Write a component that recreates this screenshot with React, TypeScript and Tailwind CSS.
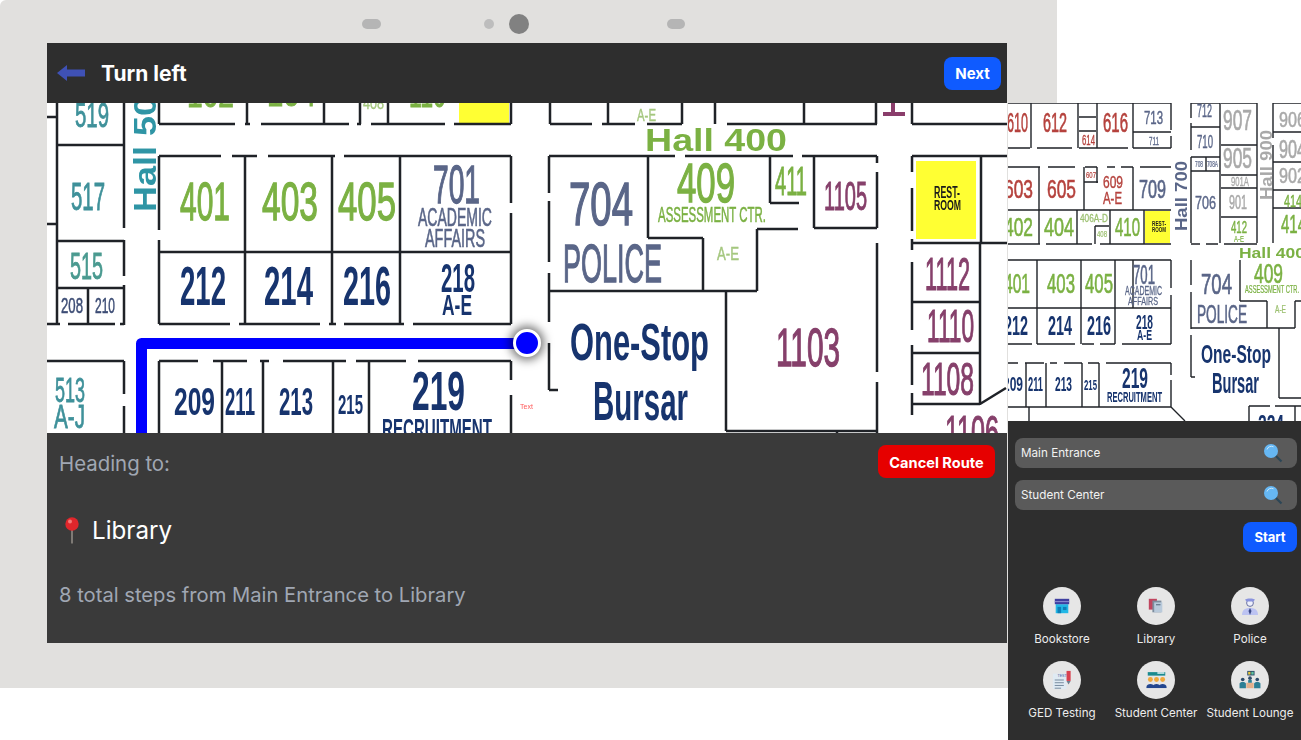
import React from "react";

type Row = [string, number, number, number, number, string?, string?];

const TEAL = "#3f919a";
const GREEN = "#7bb143";
const SLATE = "#5a6688";
const NAVY = "#17346e";
const PLUM = "#86406b";
const RED = "#b5423d";
const GRAY = "#a9a9a9";
const BLK = "#1a1a1a";

const mainTexts: Row[] = [
  ["519", 75, 109, 103, 127, TEAL],
  ["517", 71, 105, 183, 210, TEAL],
  ["515", 70, 103, 253, 279, "#4a9a90"],
  ["513", 55, 85, 378, 402, TEAL],
  ["A-J", 54, 85, 405, 428, TEAL],
  ["208", 61, 83, 298, 313, "#3d4d75"],
  ["210", 95, 115, 298, 313, "#3d4d75"],
  ["102", 187, 234, 80, 107, GREEN],
  ["104", 267, 316, 80, 106, GREEN],
  ["408", 363, 384, 98, 109, "#a5c77f"],
  ["110", 409, 446, 80, 107, GREEN],
  ["401", 180, 230, 182, 220, GREEN],
  ["403", 262, 318, 182, 220, GREEN],
  ["405", 338, 396, 182, 220, GREEN],
  ["701", 433, 480, 166, 203, SLATE],
  ["ACADEMIC", 418, 492, 208, 226, SLATE],
  ["AFFAIRS", 425, 485, 229, 247, SLATE],
  ["212", 180, 226, 266, 305, NAVY],
  ["214", 264, 313, 266, 305, NAVY],
  ["216", 343, 391, 266, 305, NAVY],
  ["218", 441, 475, 264, 292, NAVY],
  ["A-E", 442, 472, 295, 315, NAVY],
  ["209", 174, 215, 388, 415, NAVY],
  ["211", 225, 255, 388, 415, NAVY],
  ["213", 279, 313, 388, 415, NAVY],
  ["215", 338, 363, 395, 414, NAVY],
  ["219", 412, 465, 371, 410, NAVY],
  ["RECRUITMENT", 382, 492, 419, 438, NAVY],
  ["A-E", 637, 656, 110, 121, "#a5c77f"],
  ["704", 569, 633, 182, 225, SLATE],
  ["POLICE", 563, 662, 245, 282, SLATE],
  ["409", 677, 735, 163, 202, GREEN],
  ["ASSESSMENT CTR.", 658, 766, 207, 222, GREEN],
  ["411", 775, 807, 167, 195, GREEN],
  ["A-E", 717, 739, 247, 260, "#a5c77f"],
  ["1105", 824, 867, 181, 210, PLUM],
  ["REST-", 934, 960, 187, 198, BLK],
  ["ROOM", 934, 961, 200, 210, BLK],
  ["One-Stop", 570, 709, 324, 360, NAVY],
  ["Bursar", 593, 688, 381, 420, NAVY],
  ["1103", 776, 840, 328, 366, PLUM],
  ["1112", 925, 970, 258, 290, PLUM],
  ["1110", 927, 974, 310, 342, PLUM],
  ["1108", 921, 974, 363, 395, PLUM],
  ["1106", 945, 999, 416, 448, PLUM],
];

const mainWalls =
  "M47 117H57M57 103V324M47 224H57M58 145H124M124 103V228M124 240V276M124 285V325M58 241H124M58 288H124M88 288V324M47 324H60M68 324H115M120 324H124M47 361H124M124 361V394M124 406V433" +
  "M159 103V124M159 124H235M245 124H250M261 124H349M357 124H361M371 124H445M454 124H511M247 103V124M324 103V124M360 103V124M388 103V124M511 103V124" +
  "M159 156H221M232 156H257M268 156H335M344 156H511M159 156V230M159 240V324M245 156V324M332 156V324M400 156V324M511 156V203M511 213V324M159 252H511M159 324H230M239 324H320M329 324H336M344 324H404M413 324H511" +
  "M159 361H198M213 361H247M260 361H269M283 361H346M356 361H406M418 361H511M159 361V433M222 361V433M263 361V433M333 361V433M369 361V433M511 361V380M511 395V433" +
  "M550 103V124M550 124H592M602 124H635M608 103V124M647 124H682M682 103V124M715 103V124M727 124H877M804 103V124M876 103V124M912 103V124M912 124H1007" +
  "M549 156H675M685 156H793M802 156H877M549 156V193M549 201V262M549 273V322M549 343V390M549 390H558M648 156V238M648 238H703M770 156V203M770 203H799M814 156V228M814 228H877M877 156V163M877 172V228M877 243V372M877 382V433M757 229H798M757 229V291M549 291H757M703 238V291M726 291V431M726 431H877M837 431V433" +
  "M912 156V172M912 188V231M912 156H1007M981 156V243M912 239V250M912 243H1007M912 262V330M912 345V385M912 393V415M980 243V404M912 302H980M912 353H980M912 404H980M980 404L1006 388";

const sideTexts: Row[] = [
  ["610", 1007, 1028, 113, 132, RED],
  ["612", 1043, 1067, 113, 132, RED],
  ["614", 1082, 1095, 135, 145, RED],
  ["616", 1103, 1128, 113, 132, RED],
  ["713", 1144, 1163, 111, 124, SLATE],
  ["711", 1149, 1159, 137, 145, SLATE],
  ["712", 1197, 1212, 104, 117, SLATE],
  ["710", 1197, 1213, 135, 148, SLATE],
  ["708", 1195, 1203, 161, 167, SLATE],
  ["708A", 1207, 1218, 161, 167, SLATE],
  ["907", 1223, 1252, 110, 130, GRAY],
  ["905", 1223, 1252, 148, 168, GRAY],
  ["901A", 1231, 1249, 177, 186, GRAY],
  ["901", 1229, 1247, 195, 209, GRAY],
  ["412", 1231, 1247, 221, 233, GREEN],
  ["A-E", 1234, 1244, 236, 242, GREEN],
  ["906", 1279, 1306, 111, 127, GRAY],
  ["904", 1279, 1306, 140, 158, GRAY],
  ["902", 1279, 1306, 167, 183, GRAY],
  ["414", 1284, 1302, 195, 207, GREEN],
  ["414", 1281, 1306, 215, 233, GREEN],
  ["603", 1004, 1033, 180, 198, RED],
  ["605", 1047, 1076, 180, 198, RED],
  ["607", 1086, 1096, 172, 178, RED],
  ["609", 1103, 1123, 176, 188, RED],
  ["A-E", 1103, 1122, 193, 204, RED],
  ["709", 1139, 1166, 180, 198, SLATE],
  ["706", 1195, 1216, 196, 209, SLATE],
  ["402", 1004, 1033, 218, 236, GREEN],
  ["404", 1044, 1074, 218, 236, GREEN],
  ["406A-D", 1080, 1108, 214, 222, "#9cc070"],
  ["408", 1097, 1107, 231, 237, "#9cc070"],
  ["410", 1115, 1140, 218, 236, GREEN],
  ["REST-", 1152, 1166, 221, 226, BLK],
  ["ROOM", 1152, 1166, 227, 232, BLK],
  ["401", 1004, 1030, 274, 293, GREEN],
  ["403", 1047, 1075, 274, 293, GREEN],
  ["405", 1085, 1113, 274, 293, GREEN],
  ["701", 1133, 1155, 265, 284, SLATE],
  ["ACADEMIC", 1125, 1162, 286, 295, SLATE],
  ["AFFAIRS", 1128, 1158, 297, 305, SLATE],
  ["212", 1004, 1028, 316, 335, NAVY],
  ["214", 1048, 1072, 316, 335, NAVY],
  ["216", 1087, 1111, 316, 335, NAVY],
  ["218", 1136, 1153, 315, 329, NAVY],
  ["A-E", 1137, 1152, 330, 340, NAVY],
  ["209", 1003, 1023, 377, 391, NAVY],
  ["211", 1028, 1043, 377, 391, NAVY],
  ["213", 1055, 1072, 377, 391, NAVY],
  ["215", 1084, 1097, 380, 390, NAVY],
  ["219", 1122, 1148, 368, 388, NAVY],
  ["RECRUITMENT", 1107, 1162, 392, 402, NAVY],
  ["704", 1201, 1232, 273, 294, SLATE],
  ["POLICE", 1197, 1247, 305, 323, SLATE],
  ["409", 1254, 1283, 264, 283, GREEN],
  ["ASSESSMENT CTR.", 1245, 1299, 286, 293, GREEN],
  ["A-E", 1275, 1286, 306, 313, "#9cc070"],
  ["One-Stop", 1201, 1271, 345, 363, NAVY],
  ["Bursar", 1212, 1259, 373, 393, NAVY],
  ["224", 1258, 1284, 415, 433, NAVY],
];

const sideWalls =
  "M1008 103H1171M1191 103H1220M1221 103H1257M1273 103H1301M1031 103V148M1078 103V148M1097 103V148M1079 117H1096M1079 131H1096M1133 103V148M1171 103V130M1171 136V148M1133 132H1171M1008 148H1030M1037 148H1072M1079 148H1128M1133 148H1171" +
  "M1008 167H1040M1048 167H1075M1085 167H1097M1107 167H1115M1121 167H1133M1140 167H1171M1039 167V244M1084 167V210M1133 167V210M1084 182H1098M1097 167V183M1008 210H1171M1077 210V244M1110 210V244M1144 210V244M1095 226V244M1095 226H1109M1008 244H1040M1046 244H1092M1100 244H1171" +
  "M1191 103V118M1191 123V150M1191 157V243M1191 127H1220M1191 157H1220M1191 171H1220M1206 157V171M1220 103V243M1257 103V243M1221 145H1257M1221 175H1257M1221 188H1257M1221 217H1257M1191 244H1200M1206 244H1218M1224 244H1257M1273 103V138M1273 145V243M1273 132H1301M1273 162H1301M1273 190H1301M1273 208H1301" +
  "M1008 260H1171M1037 260V344M1081 260V344M1115 260V344M1133 260V308M1171 260V288M1171 295V344M1008 308H1171M1008 344H1032M1037 344H1075M1082 344H1094M1100 344H1115M1122 344H1171" +
  "M1008 363H1018M1025 363H1044M1050 363H1057M1064 363H1082M1088 363H1099M1106 363H1171M1026 363V407M1046 363V407M1082 363V407M1099 363V407M1171 363V375M1171 380V407M1008 407H1171M1029 407V421M1171 407L1185 421" +
  "M1191 260V285M1191 292V329M1191 335V377M1191 377H1195M1191 328H1279M1240 260V301M1240 301H1267M1267 301V328M1295 301V328M1295 301H1301M1267 328H1295M1279 328V398M1279 398H1301M1249 406H1270M1275 406H1301M1249 406V421M1295 406V421";

const Label = ({ r }: { r: Row }) => {
  const [s, x1, x2, y1, y2, c] = r;
  const heavy = c === NAVY || c === BLK;
  return (
    <text
      x={x1}
      y={y2}
      fontSize={(y2 - y1) / 0.7}
      textLength={x2 - x1}
      lengthAdjust="spacingAndGlyphs"
      fill={c}
      fontWeight={heavy ? 700 : 400}
      stroke={heavy ? "none" : c}
      strokeWidth={heavy ? 0 : (y2 - y1) * 0.035}
      fontFamily="'Liberation Sans', sans-serif"
    >
      {s}
    </text>
  );
};

const MainMap = () => (
  <svg viewBox="47 103 960 330" className="block h-[330px] w-[960px] bg-white blur-[0.4px]">
    <rect x="459" y="103" width="50" height="20" fill="#ffff33" />
    <rect x="916" y="161" width="60" height="78" fill="#ffff33" />
    <path d={mainWalls} stroke="#1f2227" strokeWidth="2.5" fill="none" />
    <path d="M883 116V112H891V103H895V112H905V116Z" fill="#8a3d6b" />
    {mainTexts.map((r, i) => (
      <Label key={i} r={r} />
    ))}
    <text x="645" y="150.5" fontSize="32" fontWeight="700" textLength="142" lengthAdjust="spacingAndGlyphs" fill={GREEN} fontFamily="'Liberation Sans', sans-serif">Hall 400</text>
    <text transform="rotate(-90 156 212)" x="156" y="212" fontSize="32" fontWeight="700" textLength="136" lengthAdjust="spacingAndGlyphs" fill="#2f95a5" fontFamily="'Liberation Sans', sans-serif">Hall 500</text>
    <text x="520" y="409" fontSize="7" fill="#ff5a5a" fontFamily="'Liberation Sans', sans-serif">Text</text>
    <path d="M141.5 433V343.5H527" stroke="#0000ff" strokeWidth="11" fill="none" strokeLinejoin="round" />
  </svg>
);

const SideMap = () => (
  <svg viewBox="1008 103 293 318" className="block h-[318px] w-[293px] bg-white blur-[0.3px]">
    <rect x="1145" y="211" width="25" height="32" fill="#ffff33" />
    <path d={sideWalls} stroke="#1f2227" strokeWidth="1.4" fill="none" />
    {sideTexts.map((r, i) => (
      <Label key={i} r={r} />
    ))}
    <text transform="rotate(-90 1187 231)" x="1187" y="231" fontSize="16" fontWeight="700" textLength="70" lengthAdjust="spacingAndGlyphs" fill={SLATE} fontFamily="'Liberation Sans', sans-serif">Hall 700</text>
    <text transform="rotate(-90 1272 200)" x="1272" y="200" fontSize="16" fontWeight="700" textLength="70" lengthAdjust="spacingAndGlyphs" fill={GRAY} fontFamily="'Liberation Sans', sans-serif">Hall 900</text>
    <text x="1239" y="258" fontSize="14" fontWeight="700" textLength="66" lengthAdjust="spacingAndGlyphs" fill={GREEN} fontFamily="'Liberation Sans', sans-serif">Hall 400</text>
  </svg>
);

const Magnifier = () => (
  <svg viewBox="0 0 20 20" className="h-[20px] w-[20px]">
    <path d="M12 12L18.5 18.5" stroke="#2c4656" strokeWidth="2.2" />
    <circle cx="8" cy="8" r="7" fill="#66b7f3" />
    <path d="M4 6.5A4.6 4.6 0 0 1 10.5 3.8" stroke="#d5ecfb" strokeWidth="0.9" fill="none" />
  </svg>
);

const Store = () => (
  <svg viewBox="0 0 20 20" className="h-[18px] w-[18px]">
    <rect x="3" y="8" width="14" height="10" fill="#22b8e6" />
    <path d="M2 2H18V8H2Z" fill="#3f3fa0" />
    <rect x="2" y="4.5" width="16" height="1.2" fill="#8a8ad0" />
    <rect x="5" y="11" width="4" height="7" fill="#0d7fb8" />
    <rect x="11" y="11" width="4" height="3.5" fill="#0d7fb8" />
  </svg>
);
const Books = () => (
  <svg viewBox="0 0 20 20" className="h-[18px] w-[18px]">
    <rect x="2" y="2" width="9" height="12" fill="#c0455f" />
    <rect x="6" y="4" width="10" height="13" fill="#7d8d9e" />
    <rect x="8" y="6" width="9" height="11" fill="#b9cadb" />
    <rect x="10" y="8" width="5" height="1.2" fill="#5b6b80" />
  </svg>
);
const Officer = () => (
  <svg viewBox="0 0 20 20" className="h-[20px] w-[20px]">
    <path d="M2 19C2 13 6 12 10 12S18 13 18 19Z" fill="#bcc3f2" />
    <path d="M10 12L8.5 15L10 19L11.5 15Z" fill="#3b4a88" />
    <circle cx="10" cy="7" r="3.4" fill="#eef0fb" stroke="#4a5490" strokeWidth="0.8" />
    <path d="M5 3.6C7 2 13 2 15 3.6L13.5 5.5H6.5Z" fill="#8a93dd" />
  </svg>
);
const Test = () => (
  <svg viewBox="0 0 22 22" className="h-[20px] w-[20px]">
    <rect x="1" y="4" width="15" height="17" fill="#dfeaf3" />
    <text x="6" y="8" fontSize="4" fill="#4a5fa0" fontFamily="'Liberation Sans', sans-serif">TEST</text>
    <path d="M3 11H13M3 14H13M3 17H13M3 20H10" stroke="#6d8296" strokeWidth="1" />
    <rect x="16" y="1" width="4.5" height="11" fill="#d8404f" />
    <path d="M16 12H20.5L18.2 16Z" fill="#6b7d8f" />
  </svg>
);
const People = () => (
  <svg viewBox="0 0 24 20" className="h-[18px] w-[21px]">
    <rect x="2" y="1" width="20" height="4" fill="#1b8a8f" />
    <rect x="13" y="1" width="8" height="2" fill="#c7e4e6" />
    {[5, 12, 19].map((x) => (
      <g key={x}>
        <circle cx={x} cy="9.5" r="2.8" fill="#f0a83a" />
        <path d={`M${x - 4.5} 18C${x - 4.5} 13.5 ${x + 4.5} 13.5 ${x + 4.5} 18Z`} fill="#23468f" />
      </g>
    ))}
    <rect x="0.5" y="18" width="23" height="1.2" fill="#23468f" />
  </svg>
);
const Lounge = () => (
  <svg viewBox="0 0 24 22" className="h-[20px] w-[22px]">
    <rect x="9" y="1" width="8" height="5" fill="#2d4a6a" />
    <rect x="10" y="2" width="2.5" height="3" fill="#e8c83c" />
    <rect x="13.5" y="2" width="2.5" height="3" fill="#5fc7a0" />
    <circle cx="12" cy="9" r="2" fill="#2d4a6a" />
    <rect x="8" y="14" width="8" height="6" fill="#e3b08c" />
    {[4, 20].map((x) => (
      <g key={x}>
        <circle cx={x} cy="10.5" r="2" fill="#2d4a6a" />
        <path d={`M${x - 3.5} 20V15C${x - 3.5} 12.5 ${x + 3.5} 12.5 ${x + 3.5} 15V20Z`} fill="#2d7f95" />
      </g>
    ))}
    <path d="M10 14V11.5C10 10.5 14 10.5 14 11.5V14Z" fill="#2d7f95" />
  </svg>
);

const Pin = () => (
  <svg viewBox="0 0 14 27" className="h-[27px] w-[14px]">
    <rect x="6.2" y="11" width="1.6" height="15.5" fill="#8f8a84" />
    <circle cx="7" cy="7" r="6.7" fill="#e0262b" />
    <circle cx="5" cy="4.6" r="2" fill="#f47a78" />
  </svg>
);

const places: [string, React.ReactNode][] = [
  ["Bookstore", <Store />],
  ["Library", <Books />],
  ["Police", <Officer />],
  ["GED Testing", <Test />],
  ["Student Center", <People />],
  ["Student Lounge", <Lounge />],
];

const Field = ({ label }: { label: string }) => (
  <div className="flex h-[30px] items-center justify-between rounded-lg bg-[#5a5a5a] pl-[6px] pr-[14px] text-[11.7px] text-[#f2f2f2]">
    <span className="pt-[2px]">{label}</span>
    <Magnifier />
  </div>
);

export default function App() {
  return (
    <div className="relative h-[740px] w-[1301px] overflow-hidden bg-white font-['Inter',sans-serif]">
      <div className="h-[688px] w-[1057px] rounded-br-xl rounded-tl-md bg-[#e1e0de] pl-[47px]">
        <div className="flex h-[43px] items-center pt-[5px]">
          <span className="ml-[315px] h-[10px] w-[19px] rounded-full bg-[#b5b5b5]" />
          <span className="ml-[103px] h-[10px] w-[10px] rounded-full bg-[#bdbdbd]" />
          <span className="ml-[15px] h-[20px] w-[20px] rounded-full bg-[#818181]" />
          <span className="ml-[138px] h-[10px] w-[18px] rounded-full bg-[#b5b5b5]" />
        </div>
        <div className="w-[960px]">
          <div className="flex h-[60px] items-center justify-between bg-[#2e2e2e] pl-[10px] pr-[6px]">
            <div className="flex items-center gap-[16px]">
              <svg viewBox="0 0 28 16" className="h-[16px] w-[28px]">
                <path d="M0 8L10 0V4.5H28V11.5H10V16Z" fill="#3f51b5" />
              </svg>
              <span className="pt-[2px] text-[21px] font-bold leading-[28px] text-white">Turn left</span>
            </div>
            <button className="h-[33px] w-[57px] rounded-lg bg-[#0f5bff] pt-[3px] text-[15px] font-bold text-white">Next</button>
          </div>
          <div className="relative h-[330px]">
            <MainMap />
            <div className="absolute left-[466px] top-[226px] h-[28px] w-[28px] rounded-full border-[3px] border-white bg-[#0000ff] shadow-[0_0_10px_3px_rgba(0,0,0,0.55)]" />
          </div>
          <div className="h-[210px] bg-[#3a3a3a] px-[12px]">
            <div className="flex items-start justify-between pt-[12px]">
              <span className="mt-[5px] text-[20.4px] leading-[28px] text-[#a0a7b3]">Heading to:</span>
              <button className="h-[33px] w-[117px] rounded-lg bg-[#e60000] pt-[4px] text-[14.6px] font-bold text-white">Cancel Route</button>
            </div>
            <div className="mt-[36px] flex h-[32px] items-center gap-[13px] pl-[6px]">
              <Pin />
              <span className="pt-[2px] text-[24.2px] leading-[32px] text-white">Library</span>
            </div>
            <p className="mt-[35px] text-[20.2px] leading-[28px] text-[#a0a7b3]">8 total steps from Main Entrance to Library</p>
          </div>
        </div>
      </div>

      <div className="absolute left-[1008px] top-[103px] flex h-[637px] w-[293px] flex-col">
        <SideMap />
        <div className="flex-1 bg-[#2e2e2e] pl-[7px] pr-[4px] pt-[17px]">
          <div className="flex flex-col gap-[12px]">
            <Field label="Main Entrance" />
            <Field label="Student Center" />
          </div>
          <div className="mt-[12px] flex justify-end">
            <button className="h-[30px] w-[54px] rounded-lg bg-[#0f5bff] pt-[2px] text-[13px] font-bold text-white">Start</button>
          </div>
          <div className="mt-[35px] grid grid-cols-3 gap-y-[14px]">
            {places.map(([name, icon]) => (
              <div key={name} className="flex flex-col items-center">
                <div className="flex h-[38px] w-[38px] items-center justify-center rounded-full bg-[#e6e6e6]">{icon}</div>
                <span className="mt-[6px] whitespace-nowrap text-[11.6px] leading-[16px] text-[#ececec]">{name}</span>
              </div>
            ))}
          </div>
        </div>
      </div>
    </div>
  );
}
